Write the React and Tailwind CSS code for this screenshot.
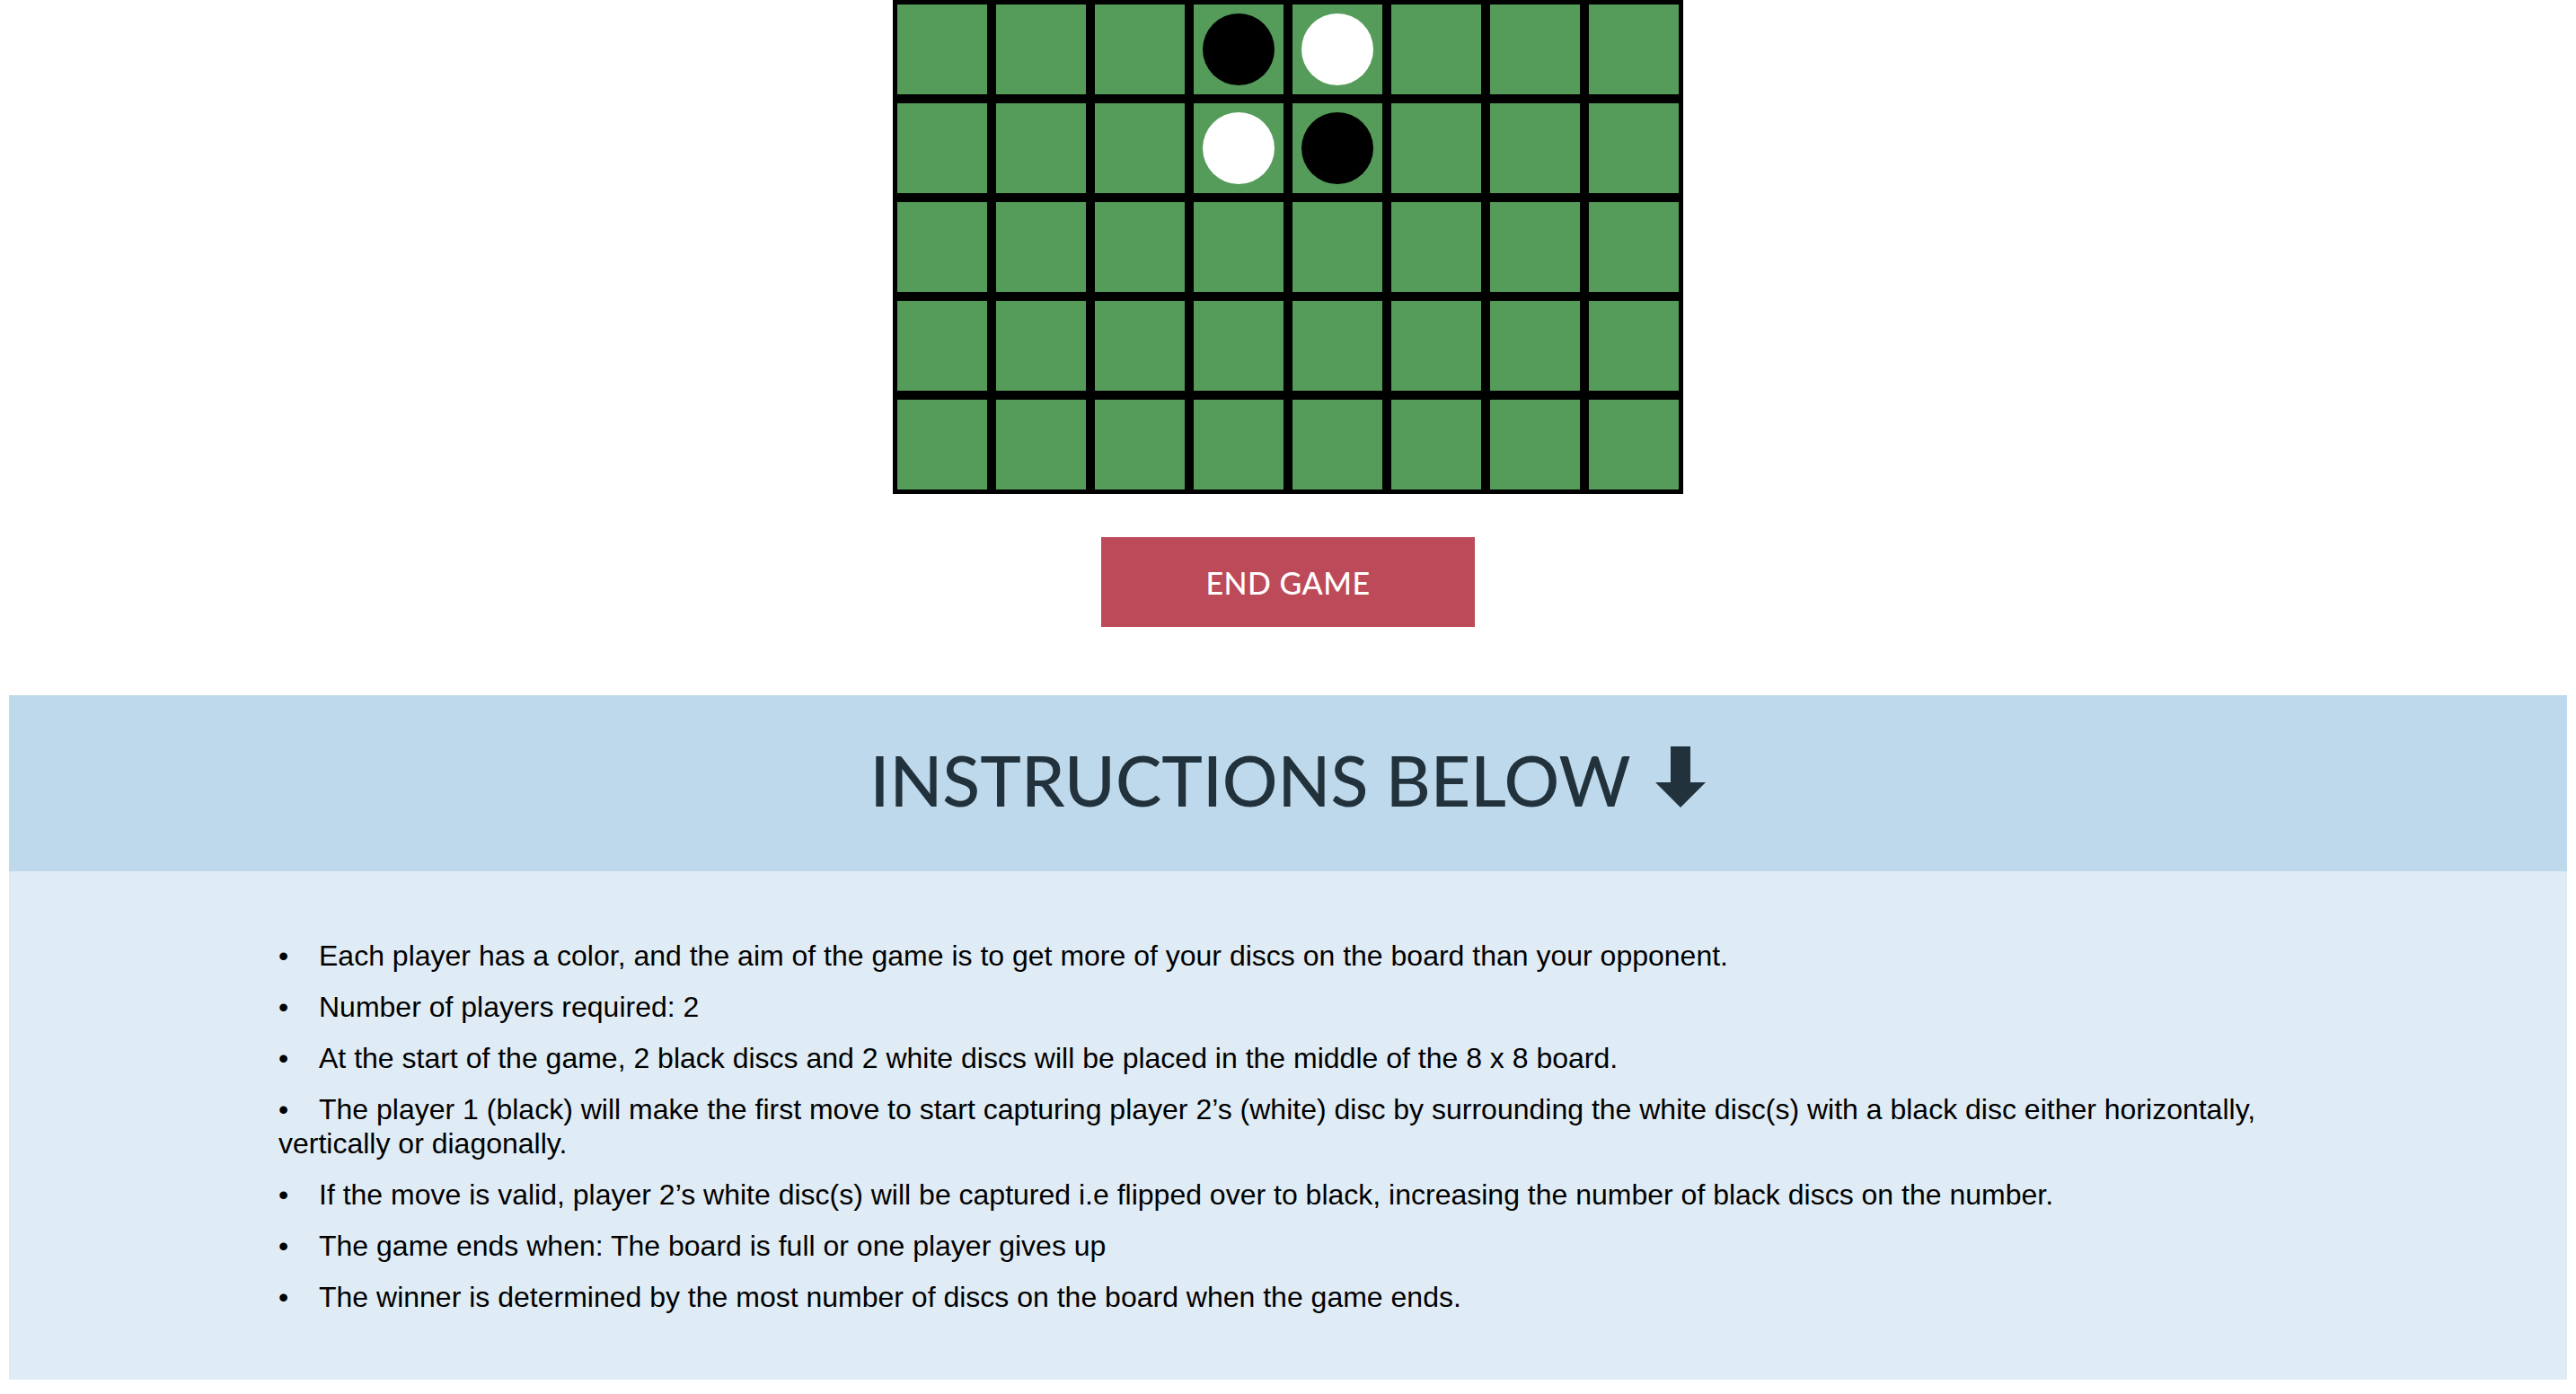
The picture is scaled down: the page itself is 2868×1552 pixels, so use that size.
import React from 'react';

const rows = [
  [null, null, null, 'black', 'white', null, null, null],
  [null, null, null, 'white', 'black', null, null, null],
  [null, null, null, null, null, null, null, null],
  [null, null, null, null, null, null, null, null],
  [null, null, null, null, null, null, null, null],
];

const rules = [
  'Each player has a color, and the aim of the game is to get more of your discs on the board than your opponent.',
  'Number of players required: 2',
  'At the start of the game, 2 black discs and 2 white discs will be placed in the middle of the 8 x 8 board.',
  'The player 1 (black) will make the first move to start capturing player 2\u2019s (white) disc by surrounding the white disc(s) with a black disc either horizontally, vertically or diagonally.',
  'If the move is valid, player 2\u2019s white disc(s) will be captured i.e flipped over to black, increasing the number of black discs on the number.',
  'The game ends when: The board is full or one player gives up',
  'The winner is determined by the most number of discs on the board when the game ends.',
];

function Cell({ disc }) {
  return (
    <div className="w-[110px] h-[110px] border-[5px] border-black bg-[#559b59] flex items-center justify-center">
      {disc === 'black' && <div className="w-[80px] h-[80px] rounded-full bg-black" />}
      {disc === 'white' && <div className="w-[80px] h-[80px] rounded-full bg-white" />}
    </div>
  );
}

function ArrowDown() {
  return (
    <svg width="56" height="68" viewBox="0 0 56 68" className="inline-block ml-[28px] mt-[-6px]">
      <rect x="17" y="0" width="22" height="41" fill="#22323c" />
      <polygon points="0,40 56,40 28,68" fill="#22323c" />
    </svg>
  );
}

export default function App() {
  return (
    <div className="min-h-screen bg-white flex flex-col items-center">
      {/* board */}
      <div className="grid grid-cols-8 w-fit">
        {rows.map((row, r) =>
          row.map((disc, c) => <Cell key={`${r}-${c}`} disc={disc} />)
        )}
      </div>

      <button
        type="button"
        className="mt-[48px] w-[416px] h-[100px] bg-[#bd4a59] text-white text-[34px] font-medium tracking-[0.5px] font-['Lato',sans-serif]"
      >
        END GAME
      </button>

      {/* instructions */}
      <section className="mt-[76px] w-[2848px]">
        <div className="h-[196px] bg-[#bed9eb] flex items-center justify-center pb-[8px]">
          <h2 className="flex items-center text-[77px] font-medium leading-none text-[#22323c] font-['Lato',sans-serif]">
            INSTRUCTIONS BELOW
            <ArrowDown />
          </h2>
        </div>
        <div className="bg-[#e0ecf5] pl-[300px] pr-[300px] pt-[75px] pb-[73px]">
          <ul className="space-y-[19px] text-[32px] leading-[38px] text-black font-['Liberation_Sans',Arial,sans-serif]">
            {rules.map((rule) => (
              <li key={rule}>
                <span className="inline-block w-[45px]">•</span>
                {rule}
              </li>
            ))}
          </ul>
        </div>
      </section>
    </div>
  );
}
